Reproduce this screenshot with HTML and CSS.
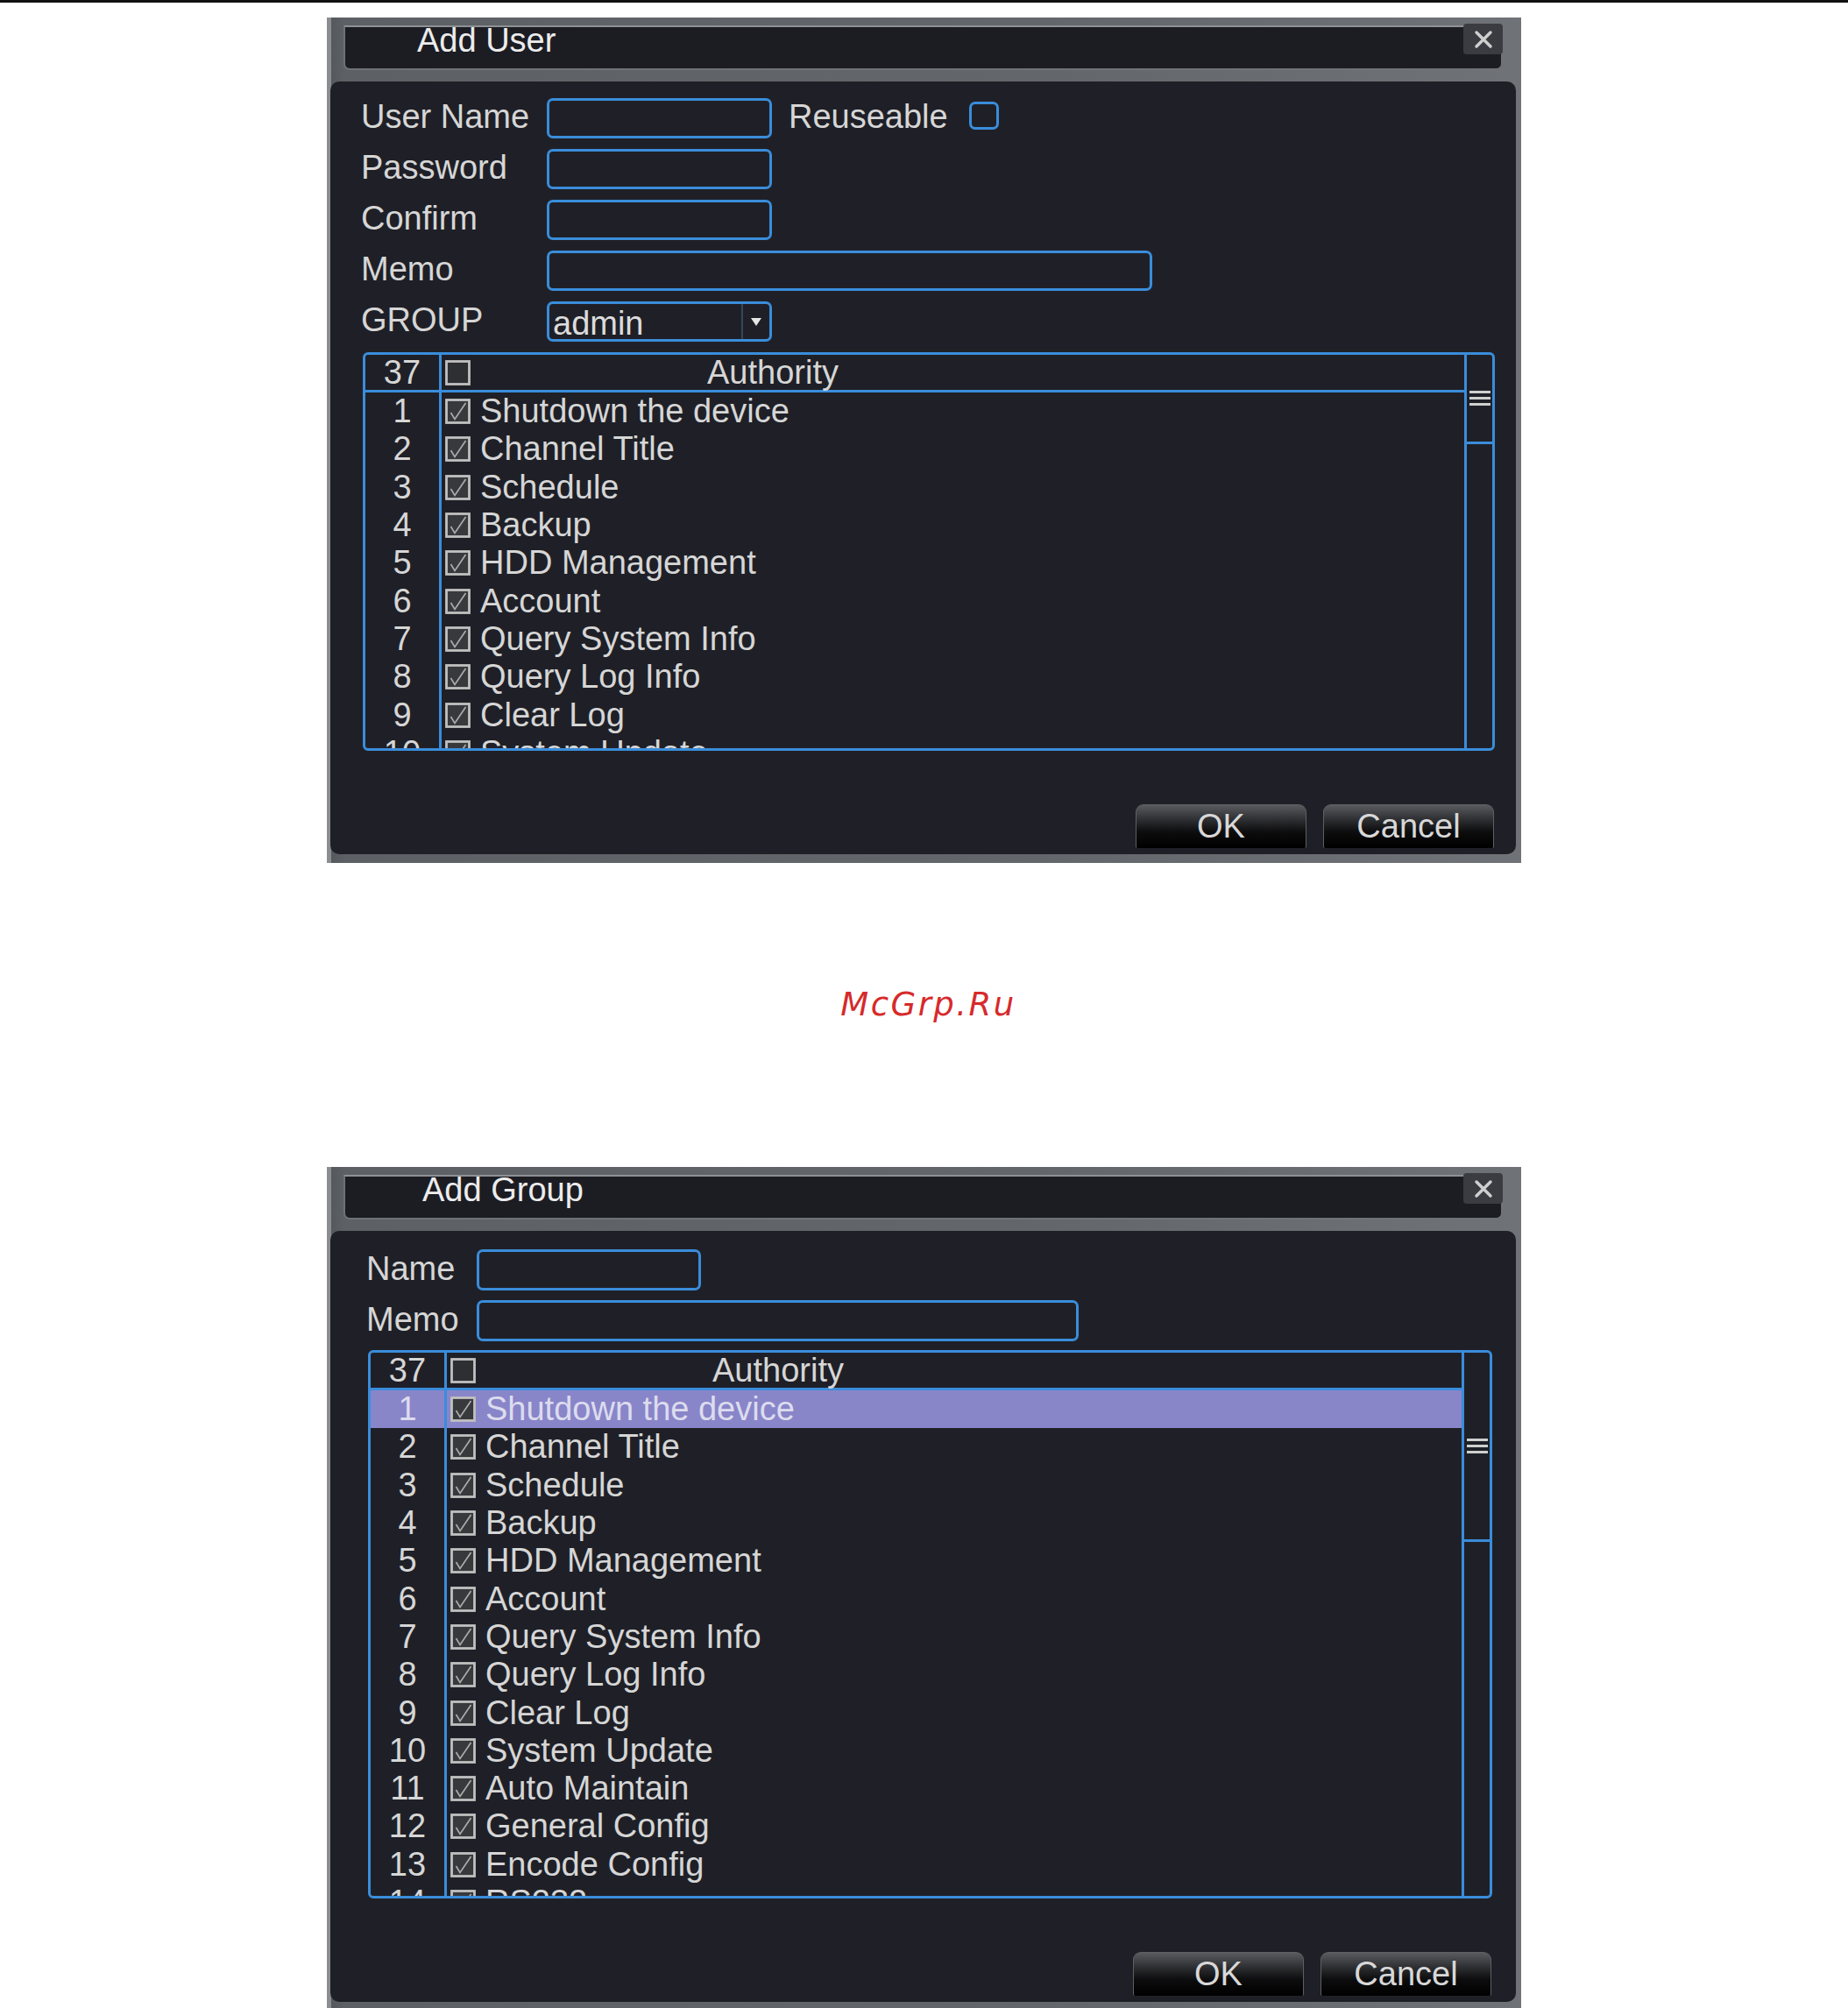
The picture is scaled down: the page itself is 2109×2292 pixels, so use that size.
FILE: index.html
```html
<!DOCTYPE html>
<html lang="en">
<head>
<meta charset="utf-8">
<title>Add User / Add Group</title>
<link rel="stylesheet" href="styles.css">
</head>
<body>
<div class="topline"></div>

<section class="dialog dialog-user">
  <header class="titlebar">
    <span class="title">Add User</span>
    <span class="close"><svg width="26" height="26" viewBox="0 0 26 26"><path d="M5 5 L21 21 M21 5 L5 21" stroke="#cfcfcf" stroke-width="3.5" stroke-linecap="round"/></svg></span>
  </header>
  <div class="sheet">
    <div class="form">
      <span class="lbl">User Name</span>
      <div class="field"><div class="input"></div><span class="reuse">Reuseable</span><span class="cbx"></span></div>
      <span class="lbl">Password</span>
      <div class="field"><div class="input"></div></div>
      <span class="lbl">Confirm</span>
      <div class="field"><div class="input"></div></div>
      <span class="lbl">Memo</span>
      <div class="field"><div class="input memo"></div></div>
      <span class="lbl">GROUP</span>
      <div class="field"><div class="input select"><span class="val">admin</span><span class="arrow"><svg width="12" height="9" viewBox="0 0 12 9"><polygon points="0,0 12,0 6,9" fill="#e6e6e6"/></svg></span></div></div>
    </div>
    <div class="table">
      <div class="list">
        <div class="row head"><span class="num">37</span><svg class="chk"><use href="#box"/></svg><span class="auth">Authority</span></div>
        <div class="row"><span class="num">1</span><svg class="chk"><use href="#tick"/></svg><span>Shutdown the device</span></div>
        <div class="row"><span class="num">2</span><svg class="chk"><use href="#tick"/></svg><span>Channel Title</span></div>
        <div class="row"><span class="num">3</span><svg class="chk"><use href="#tick"/></svg><span>Schedule</span></div>
        <div class="row"><span class="num">4</span><svg class="chk"><use href="#tick"/></svg><span>Backup</span></div>
        <div class="row"><span class="num">5</span><svg class="chk"><use href="#tick"/></svg><span>HDD Management</span></div>
        <div class="row"><span class="num">6</span><svg class="chk"><use href="#tick"/></svg><span>Account</span></div>
        <div class="row"><span class="num">7</span><svg class="chk"><use href="#tick"/></svg><span>Query System Info</span></div>
        <div class="row"><span class="num">8</span><svg class="chk"><use href="#tick"/></svg><span>Query Log Info</span></div>
        <div class="row"><span class="num">9</span><svg class="chk"><use href="#tick"/></svg><span>Clear Log</span></div>
        <div class="row"><span class="num">10</span><svg class="chk"><use href="#tick"/></svg><span>System Update</span></div>
        <div class="row"><span class="num">11</span><svg class="chk"><use href="#tick"/></svg><span>Auto Maintain</span></div>
      </div>
      <div class="scroll">
        <div class="thumb"><svg width="24" height="17" viewBox="0 0 24 17"><rect x="0" y="0" width="24" height="3" fill="#cfcfcf"/><rect x="0" y="7" width="24" height="3" fill="#cfcfcf"/><rect x="0" y="14" width="24" height="3" fill="#cfcfcf"/></svg></div>
      </div>
    </div>
    <div class="buttons"><div class="btn">OK</div><div class="btn">Cancel</div></div>
  </div>
</section>

<div class="mark">McGrp.Ru</div>

<section class="dialog dialog-group">
  <header class="titlebar">
    <span class="title">Add Group</span>
    <span class="close"><svg width="26" height="26" viewBox="0 0 26 26"><path d="M5 5 L21 21 M21 5 L5 21" stroke="#cfcfcf" stroke-width="3.5" stroke-linecap="round"/></svg></span>
  </header>
  <div class="sheet">
    <div class="form">
      <span class="lbl">Name</span>
      <div class="field"><div class="input"></div></div>
      <span class="lbl">Memo</span>
      <div class="field"><div class="input memo"></div></div>
    </div>
    <div class="table">
      <div class="list">
        <div class="row head"><span class="num">37</span><svg class="chk"><use href="#box"/></svg><span class="auth">Authority</span></div>
        <div class="row sel"><span class="num">1</span><svg class="chk"><use href="#tick"/></svg><span>Shutdown the device</span></div>
        <div class="row"><span class="num">2</span><svg class="chk"><use href="#tick"/></svg><span>Channel Title</span></div>
        <div class="row"><span class="num">3</span><svg class="chk"><use href="#tick"/></svg><span>Schedule</span></div>
        <div class="row"><span class="num">4</span><svg class="chk"><use href="#tick"/></svg><span>Backup</span></div>
        <div class="row"><span class="num">5</span><svg class="chk"><use href="#tick"/></svg><span>HDD Management</span></div>
        <div class="row"><span class="num">6</span><svg class="chk"><use href="#tick"/></svg><span>Account</span></div>
        <div class="row"><span class="num">7</span><svg class="chk"><use href="#tick"/></svg><span>Query System Info</span></div>
        <div class="row"><span class="num">8</span><svg class="chk"><use href="#tick"/></svg><span>Query Log Info</span></div>
        <div class="row"><span class="num">9</span><svg class="chk"><use href="#tick"/></svg><span>Clear Log</span></div>
        <div class="row"><span class="num">10</span><svg class="chk"><use href="#tick"/></svg><span>System Update</span></div>
        <div class="row"><span class="num">11</span><svg class="chk"><use href="#tick"/></svg><span>Auto Maintain</span></div>
        <div class="row"><span class="num">12</span><svg class="chk"><use href="#tick"/></svg><span>General Config</span></div>
        <div class="row"><span class="num">13</span><svg class="chk"><use href="#tick"/></svg><span>Encode Config</span></div>
        <div class="row"><span class="num">14</span><svg class="chk"><use href="#tick"/></svg><span>RS232</span></div>
        <div class="row"><span class="num">15</span><svg class="chk"><use href="#tick"/></svg><span>Network Config</span></div>
      </div>
      <div class="scroll">
        <div class="thumb"><svg width="24" height="17" viewBox="0 0 24 17"><rect x="0" y="0" width="24" height="3" fill="#cfcfcf"/><rect x="0" y="7" width="24" height="3" fill="#cfcfcf"/><rect x="0" y="14" width="24" height="3" fill="#cfcfcf"/></svg></div>
      </div>
    </div>
    <div class="buttons"><div class="btn">OK</div><div class="btn">Cancel</div></div>
  </div>
</section>

<svg class="defs" width="0" height="0">
  <symbol id="box" viewBox="0 0 29 29">
    <rect x="1.5" y="1.5" width="26" height="26" fill="#2e2f33" stroke="#c0c0c0" stroke-width="2.8"/>
  </symbol>
  <symbol id="tick" viewBox="0 0 29 29">
    <rect x="1.5" y="1.5" width="26" height="26" fill="#38393d" stroke="#c0c0c0" stroke-width="2.8"/>
    <path d="M6.5 16 L11 23.5 L23.5 5" fill="none" stroke="#ababab" stroke-width="1.7"/>
  </symbol>
</svg>
</body>
</html>
```

FILE: styles.css
```css
html, body {
  margin: 0;
  padding: 0;
}
body {
  height: 2292px;
  overflow: hidden;
  background: #ffffff;
  font-family: "Liberation Sans", Arial, sans-serif;
}
.topline {
  height: 3px;
  background: #111111;
}

/* ---------- dialog frame ---------- */
.dialog {
  width: 1363px;
  margin: 0 auto;
  box-sizing: border-box;
  padding: 9px 0 10px;
  background: linear-gradient(to right, #8b8e91 0, #8b8e91 5px, #55585c 5px, #5d6064 20px, #63666a 60%, #6f7276 100%);
}
.dialog-user { margin-top: 17px; }
.dialog-group { margin-top: 163px; }

.titlebar {
  margin: 0 21px 0 19px;
  height: 51px;
  box-sizing: border-box;
  background: #1c1d23;
  border: 2px solid #6f7277;
  border-top-color: #8e9195;
  border-radius: 0 0 7px 7px;
  display: flex;
  justify-content: space-between;
  align-items: flex-start;
}
.title {
  color: #ececec;
  font-size: 38px;
  line-height: 38px;
  margin-top: -4px;
  padding-left: 82px;
}
.dialog-group .title { padding-left: 88px; }
.close {
  width: 45px;
  height: 35px;
  margin: -4px -2px 0 0;
  background: #3b3c42;
  border-radius: 4px;
  display: flex;
  align-items: center;
  justify-content: center;
}

.sheet {
  margin: 13px 6px 0 4px;
  background: #1f2027;
  border-radius: 10px;
  padding: 19px 24px 7px 35px;
}
.dialog-group .sheet { padding: 21px 27px 7px 41px; }

/* ---------- form ---------- */
.form {
  display: grid;
  grid-template-columns: 212px 1fr;
  grid-auto-rows: 46px;
  row-gap: 12px;
  align-items: center;
}
.dialog-group .form {
  grid-template-columns: 126px 1fr;
  grid-auto-rows: 47px;
  row-gap: 11px;
}
.lbl {
  color: #d6d6d6;
  font-size: 38px;
  line-height: 46px;
  margin-top: -4px;
  white-space: nowrap;
}
.field {
  display: flex;
  align-items: center;
  height: 100%;
}
.input {
  width: 257px;
  height: 100%;
  box-sizing: border-box;
  border: 3px solid #3a8ddb;
  border-radius: 7px;
}
.input.memo { width: 691px; }
.dialog-group .input { width: 256px; }
.dialog-group .input.memo { width: 687px; }
.reuse {
  margin-left: 19px;
  color: #d6d6d6;
  font-size: 38px;
  line-height: 46px;
  margin-top: -4px;
}
.cbx {
  width: 34px;
  height: 32px;
  box-sizing: border-box;
  border: 3px solid #3a8ddb;
  border-radius: 7px;
  margin-left: 24px;
  margin-top: -6px;
}
.select {
  display: flex;
  align-items: stretch;
}
.select .val {
  flex: 1;
  padding-left: 4px;
  color: #dcdcdc;
  font-size: 38px;
  line-height: 44px;
}
.select .arrow {
  width: 30px;
  border-left: 2px solid #36465a;
  display: flex;
  align-items: center;
  justify-content: center;
}

/* ---------- authority table ---------- */
.table {
  margin: 12px 0 0 2px;
  height: 455px;
  box-sizing: border-box;
  border: 3px solid #3a8ddb;
  border-radius: 6px;
  display: flex;
  overflow: hidden;
}
.dialog-group .table {
  margin-top: 10px;
  height: 626px;
}
.list {
  flex: 1;
  overflow: hidden;
}
.row {
  display: flex;
  align-items: center;
  height: 43.3px;
  color: #d6d6d6;
  font-size: 38px;
  line-height: 43px;
  white-space: nowrap;
}
.row.head {
  height: 39px;
  line-height: 39px;
  padding-top: 1px;
  box-sizing: content-box;
  border-bottom: 3px solid #3a8ddb;
}
.row.head .num { margin-top: -1px; padding-top: 1px; }
.row.sel {
  background: #8985c9;
  color: #dcdcee;
}
.num {
  width: 84px;
  flex: none;
  align-self: stretch;
  border-right: 3px solid #3a8ddb;
  display: flex;
  align-items: center;
  justify-content: center;
}
.chk {
  width: 29px;
  height: 29px;
  flex: none;
  margin: 0 11px 0 4px;
}
.auth { margin-left: 259px; }

.scroll {
  width: 29px;
  flex: none;
  border-left: 3px solid #3a8ddb;
}
.thumb {
  height: 99px;
  border-bottom: 3px solid #3a8ddb;
  display: flex;
  align-items: center;
  justify-content: center;
}
.dialog-group .thumb { height: 213px; }

/* ---------- buttons ---------- */
.buttons {
  display: flex;
  justify-content: flex-end;
  gap: 19px;
  margin-top: 61px;
  padding-right: 1px;
}
.btn {
  width: 195px;
  height: 50px;
  box-sizing: border-box;
  border: 1px solid #5e5f63;
  border-bottom: none;
  border-radius: 9px 9px 2px 2px;
  background: linear-gradient(#5a5b5f 0, #2c2d30 35%, #0d0d0e 62%, #000000 100%);
  color: #d8d8d8;
  font-size: 38px;
  line-height: 48px;
  text-align: center;
}

/* ---------- watermark ---------- */
.mark {
  margin-top: 140px;
  height: 44px;
  line-height: 44px;
  text-align: center;
  padding-left: 10px;
  font-family: "DejaVu Sans", sans-serif;
  font-style: italic;
  font-size: 37px;
  letter-spacing: 2.5px;
  color: #d62a2b;
}

.defs {
  display: block;
  width: 0;
  height: 0;
  overflow: hidden;
}
```
